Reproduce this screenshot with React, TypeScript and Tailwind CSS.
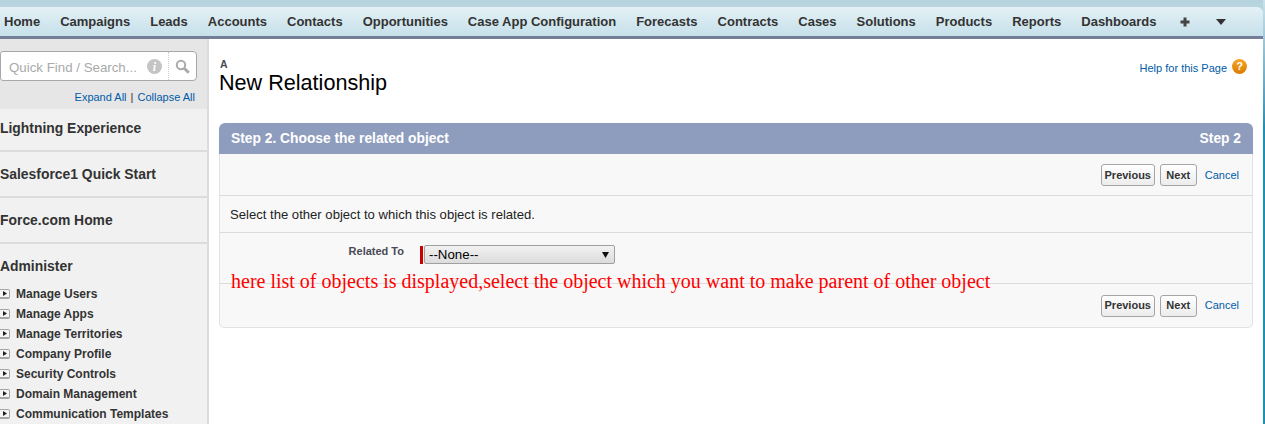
const tabs = [
  'Home', 'Campaigns', 'Leads', 'Accounts', 'Contacts', 'Opportunities', 'Case App Configuration',
  'Forecasts', 'Contracts', 'Cases', 'Solutions', 'Products', 'Reports', 'Dashboards',
];

const headings = ['Lightning Experience', 'Salesforce1 Quick Start', 'Force.com Home'];

const adminItems = [
  'Manage Users', 'Manage Apps', 'Manage Territories', 'Company Profile',
  'Security Controls', 'Domain Management', 'Communication Templates',
];

function ActionRow() {
  return (
    <div className="flex h-full items-center justify-end pr-[13px]">
      <button className="h-[22px] w-[54px] rounded-[3px] border border-[#a5a5a5] bg-gradient-to-b from-white to-[#ececec] text-[11px] font-bold text-[#333]">
        Previous
      </button>
      <button className="ml-[5px] h-[22px] w-[37px] rounded-[3px] border border-[#a5a5a5] bg-gradient-to-b from-white to-[#ececec] text-[11px] font-bold text-[#333]">
        Next
      </button>
      <a className="ml-[8px] text-[11px] text-[#015ba7]">Cancel</a>
    </div>
  );
}

export default function App() {
  return (
    <div className="flex h-[424px] w-[1265px] overflow-hidden bg-white font-['Liberation_Sans',Arial,sans-serif]">
      <div className="w-[1263px] shrink-0">
        <div className="bg-gradient-to-b from-[#b5d3de] to-[#cbe1e9] pt-[7px]">
          <div className="flex h-[32px] items-start rounded-tr-[6px] border-b-[3px] border-[#747e96] bg-gradient-to-b from-[#e4f1f6] to-[#c6e0ea] pl-[4px] pt-[7px] text-[13px] font-bold leading-[16px] text-[#333]">
            {tabs.map((t) => (
              <span key={t} className="mr-[20px] whitespace-nowrap">{t}</span>
            ))}
            <svg width="10" height="10" viewBox="0 0 10 10" className="ml-[4px] mt-[3px]">
              <path d="M3.5 0.5h3v3h3v3h-3v3h-3v-3h-3v-3h3z" fill="#444" />
            </svg>
            <svg width="10" height="6" viewBox="0 0 10 6" className="ml-[26px] mt-[5px]">
              <path d="M0 0h10L5 6z" fill="#333" />
            </svg>
          </div>
        </div>

        <div className="flex h-[385px]">
          <aside className="w-[209px] shrink-0 border-r-[2px] border-[#dcdcdc] bg-[#f1f1f1]">
            <div className="h-[70px] bg-[#e6e6e6] pt-[12px]">
              <div className="flex h-[30px] w-[197px] items-center rounded-r-[4px] rounded-l-[3px] border border-[#a8a8a8] bg-white">
                <span className="ml-[8px] w-[138px] whitespace-nowrap pt-[4px] text-[13.3px] text-[#a9a9a9]">Quick Find / Search...</span>
                <span className="mt-[1px] flex h-[15px] w-[15px] items-center justify-center rounded-full bg-[#c4c4c4]">
                  <span className="font-['Liberation_Serif',serif] text-[12px] font-bold italic leading-none text-white">i</span>
                </span>
                <span className="ml-[6px] flex h-full flex-1 items-center justify-center border-l border-dotted border-[#ccc]">
                  <svg width="15" height="15" viewBox="0 0 15 15" fill="none" stroke="#aaa">
                    <circle cx="6" cy="6" r="4.2" strokeWidth="2" />
                    <path d="M9.2 9.2l4.6 4.6" strokeWidth="3" />
                  </svg>
                </span>
              </div>
              <div className="mt-[9px] pr-[12px] text-right text-[11px] leading-[14px] text-[#015ba7]">
                Expand All <span className="mx-[1px] text-[#333]">|</span> Collapse All
              </div>
            </div>

            {headings.map((h) => (
              <div key={h} className="mb-[3px] h-[43px] border-b-[2px] border-[#dcdcdc] pt-[11px] text-[13.9px] font-bold leading-[17px] text-[#333]">
                {h}
              </div>
            ))}

            <div className="pt-[11px] text-[13.9px] font-bold leading-[17px] text-[#333]">Administer</div>
            <ul className="mt-[9px]">
              {adminItems.map((item) => (
                <li key={item} className="flex h-[20px] items-center text-[12px] font-bold text-[#333]">
                  <span className="flex h-[10px] w-[10px] items-center justify-center rounded-r-[2px] border border-l-0 border-b-2 border-[#a5a5a5] bg-[#f4f4f4]">
                    <svg width="4" height="5" viewBox="0 0 4 5"><path d="M0 0l4 2.5L0 5z" fill="#222" /></svg>
                  </span>
                  <span className="ml-[6px]">{item}</span>
                </li>
              ))}
            </ul>
          </aside>

          <main className="min-w-0 flex-1 pl-[10px] pr-[10px]">
            <div className="flex h-[84px] items-start justify-between">
              <div className="pt-[20px]">
                <div className="pl-[1px] text-[10.5px] font-bold leading-[11px] text-[#4a4a56]">A</div>
                <h1 className="mt-[1px] text-[21.6px] leading-[24px] text-black">New Relationship</h1>
              </div>
              <div className="flex items-start pt-[20px] pr-[6px]">
                <a className="pt-[3px] text-[11px] leading-[13px] text-[#015ba7]">Help for this Page</a>
                <span className="ml-[5px] flex h-[15px] w-[15px] items-center justify-center rounded-full bg-gradient-to-b from-[#f5a623] to-[#d97c00] text-[11px] font-bold leading-none text-white">?</span>
              </div>
            </div>

            <section className="relative">
              <div className="flex h-[31px] items-center justify-between rounded-t-[6px] bg-[#8e9dbe] px-[12px] pt-[1px] text-[13.8px] font-bold text-white">
                <span>Step 2. Choose the related object</span>
                <span>Step 2</span>
              </div>
              <div className="rounded-b-[5px] border-x border-b border-[#e3e3e3] bg-[#f8f8f8]">
                <div className="h-[42px] border-b border-[#dbdbdb] pt-[1px]"><ActionRow /></div>
                <div className="flex h-[37px] items-center border-b border-[#dbdbdb] pl-[10px] pt-[1px] text-[13.1px] text-[#222]">
                  Select the other object to which this object is related.
                </div>
                <div className="flex h-[51px] items-start border-b border-[#dbdbdb] pt-[12px]">
                  <div className="w-[184px] text-right text-[11px] font-bold leading-[13px] text-[#4a4a56]">Related To</div>
                  <div className="ml-[16px] flex items-center">
                    <span className="h-[18px] w-[3px] bg-[#c00]" />
                    <div className="ml-[1px] flex h-[19px] w-[191px] items-center justify-between rounded-[2px] border border-[#a0a0a0] bg-gradient-to-b from-[#f2f2f2] to-[#dcdcdc] pl-[4px] pr-[5px] text-[13.3px] leading-none text-black">
                      <span>--None--</span>
                      <svg width="7" height="7" viewBox="0 0 7 7"><path d="M0 1h7L3.5 7z" fill="#111" /></svg>
                    </div>
                  </div>
                </div>
                <div className="h-[43px]"><ActionRow /></div>
              </div>
              <p className="absolute left-[12px] top-[146px] whitespace-nowrap font-['Liberation_Serif',serif] text-[20px] leading-[24px] text-[#ff0000]">
                here list of objects is displayed,select the object which you want to make parent of other object
              </p>
            </section>
          </main>
        </div>
      </div>
      <div className="w-[2px] bg-gradient-to-b from-[#cbe3ea] to-[#1b8fb5] to-[30%]" />
    </div>
  );
}
